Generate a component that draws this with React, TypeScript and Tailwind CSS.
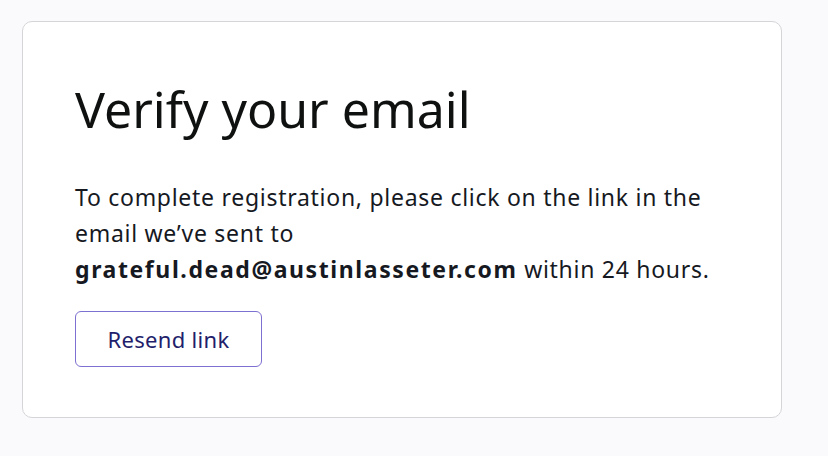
export default function App() {
  return (
    <div className="w-[828px] h-[456px] bg-[#fafafc] pt-[21px] pl-[22px]" style={{ fontFamily: '"Noto Sans", sans-serif' }}>
      <div className="w-[760px] h-[397px] bg-white border border-[#d5d5d9] rounded-[10px] pl-[52px] pt-[57px]">
        <h1 className="text-[50px] leading-[60px] font-normal text-[#0f1111]">Verify your email</h1>
        <p className="mt-[40px] text-[23px] leading-[36px] tracking-[0.72px] text-[#16191f]">
          To complete registration, please click on the link in the
          <br />
          email we’ve sent to
          <br />
          <span className="font-bold tracking-[1.6px]">grateful.dead@austinlasseter.com</span> within 24 hours.
        </p>
        <button className="mt-[24px] w-[187px] h-[56px] border border-[#7c70d0] rounded-[6px] text-[22px] tracking-[0.3px] text-[#231e6b]">
          Resend link
        </button>
      </div>
    </div>
  );
}
